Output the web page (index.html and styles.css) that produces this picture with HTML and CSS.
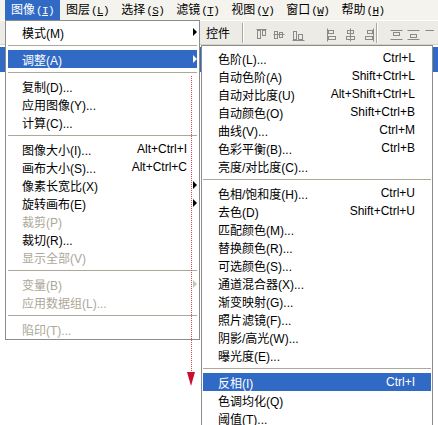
FILE: index.html
```html
<!DOCTYPE html>
<html>
<head>
    <link rel="stylesheet" href="styles.css">
</head>
<body>
    <div class="menubar">
        <span class="mb-item active">图像<span class="mn">(<u>I</u>)</span></span>
        <span class="mb-item">图层<span class="mn">(<u>L</u>)</span></span>
        <span class="mb-item">选择<span class="mn">(<u>S</u>)</span></span>
        <span class="mb-item">滤镜<span class="mn">(<u>T</u>)</span></span>
        <span class="mb-item">视图<span class="mn">(<u>V</u>)</span></span>
        <span class="mb-item">窗口<span class="mn">(<u>W</u>)</span></span>
        <span class="mb-item">帮助<span class="mn">(<u>H</u>)</span></span>
    </div>

    <div class="toolbar">
        <span class="tb-label">控件</span>
        <span class="tb-sep"></span>
        <svg class="tb-icons" width="58" height="14" viewBox="0 0 58 14">
            <g fill="none" stroke="#8a8a8a">
                <path d="M0.5 1.5h10"/><rect x="1.5" y="2.5" width="3" height="8"/><rect x="6.5" y="2.5" width="3" height="5"/>
                <path d="M17.5 6.5h11"/><rect x="18.5" y="3.5" width="3" height="7"/><rect x="23.5" y="4.5" width="3" height="5"/>
                <path d="M36.5 12.5h12"/><rect x="37.5" y="3.5" width="3" height="8"/><rect x="42.5" y="6.5" width="4" height="5"/>
            </g>
        </svg>
        <svg class="tb-icons" width="50" height="14" viewBox="0 0 50 14">
            <g fill="none" stroke="#8a8a8a">
                <path d="M1.5 0.5v13"/><rect x="2.5" y="2.5" width="5" height="3"/><rect x="2.5" y="8.5" width="7" height="3"/>
                <path d="M24.5 0.5v13"/><rect x="21.5" y="2.5" width="6" height="3"/><rect x="20.5" y="8.5" width="8" height="3"/>
                <path d="M47.5 0.5v13"/><rect x="41.5" y="2.5" width="5" height="3"/><rect x="39.5" y="8.5" width="7" height="3"/>
            </g>
        </svg>
        <span class="tb-sep"></span>
        <svg class="tb-icons" width="44" height="14" viewBox="0 0 44 14">
            <g fill="none" stroke="#8a8a8a">
                <path d="M0.5 2.5h12M0.5 11.5h12"/><rect x="3.5" y="4.5" width="6" height="3"/>
                <path d="M17.5 2.5h12M17.5 11.5h12"/><rect x="20.5" y="6.5" width="6" height="3"/>
                <path d="M35.5 2.5h9"/>
            </g>
        </svg>
    </div>
    <div class="desk">
        <div class="palette-title"></div>
    </div>

    <div class="menu menu-main">
        <div class="item"><span class="label">模式(M)</span><span class="arrow"><i></i></span></div>
        <div class="sep"></div>
        <div class="item hl"><span class="label">调整(A)</span><span class="arrow"><i></i></span></div>
        <div class="sep"></div>
        <div class="item"><span class="label">复制(D)...</span><span class="arrow"></span></div>
        <div class="item"><span class="label">应用图像(Y)...</span><span class="arrow"></span></div>
        <div class="item"><span class="label">计算(C)...</span><span class="arrow"></span></div>
        <div class="sep"></div>
        <div class="item"><span class="label">图像大小(I)...</span><span class="key">Alt+Ctrl+I</span><span class="arrow"></span></div>
        <div class="item"><span class="label">画布大小(S)...</span><span class="key">Alt+Ctrl+C</span><span class="arrow"></span></div>
        <div class="item"><span class="label">像素长宽比(X)</span><span class="arrow"><i></i></span></div>
        <div class="item"><span class="label">旋转画布(E)</span><span class="arrow"><i></i></span></div>
        <div class="item off"><span class="label">裁剪(P)</span><span class="arrow"></span></div>
        <div class="item"><span class="label">裁切(R)...</span><span class="arrow"></span></div>
        <div class="item off"><span class="label">显示全部(V)</span><span class="arrow"></span></div>
        <div class="sep"></div>
        <div class="item off"><span class="label">变量(B)</span><span class="arrow"><i></i></span></div>
        <div class="item off"><span class="label">应用数据组(L)...</span><span class="arrow"></span></div>
        <div class="sep"></div>
        <div class="item off"><span class="label">陷印(T)...</span><span class="arrow"></span></div>
    </div>

    <div class="menu menu-sub">
        <div class="item"><span class="label">色阶(L)...</span><span class="key">Ctrl+L</span></div>
        <div class="item"><span class="label">自动色阶(A)</span><span class="key">Shift+Ctrl+L</span></div>
        <div class="item"><span class="label">自动对比度(U)</span><span class="key">Alt+Shift+Ctrl+L</span></div>
        <div class="item"><span class="label">自动颜色(O)</span><span class="key">Shift+Ctrl+B</span></div>
        <div class="item"><span class="label">曲线(V)...</span><span class="key">Ctrl+M</span></div>
        <div class="item"><span class="label">色彩平衡(B)...</span><span class="key">Ctrl+B</span></div>
        <div class="item"><span class="label">亮度/对比度(C)...</span></div>
        <div class="sep"></div>
        <div class="item"><span class="label">色相/饱和度(H)...</span><span class="key">Ctrl+U</span></div>
        <div class="item"><span class="label">去色(D)</span><span class="key">Shift+Ctrl+U</span></div>
        <div class="item"><span class="label">匹配颜色(M)...</span></div>
        <div class="item"><span class="label">替换颜色(R)...</span></div>
        <div class="item"><span class="label">可选颜色(S)...</span></div>
        <div class="item"><span class="label">通道混合器(X)...</span></div>
        <div class="item"><span class="label">渐变映射(G)...</span></div>
        <div class="item"><span class="label">照片滤镜(F)...</span></div>
        <div class="item"><span class="label">阴影/高光(W)...</span></div>
        <div class="item"><span class="label">曝光度(E)...</span></div>
        <div class="sep"></div>
        <div class="item hl"><span class="label">反相(I)</span><span class="key">Ctrl+I</span></div>
        <div class="item"><span class="label">色调均化(Q)</span></div>
        <div class="item"><span class="label">阈值(T)...</span></div>
    </div>

    <!-- red dotted pointer drawn over the menu -->
    <svg class="pointer" width="10" height="312" viewBox="0 0 10 312">
        <path d="M5.5 0v296" stroke="#e03c50" stroke-width="1" stroke-dasharray="1 1"/>
        <polygon points="1,296 9,296 5,310" fill="#c8102e"/>
    </svg>
</body>
</html>
```

FILE: styles.css
```css
body {
    margin: 0;
    width: 438px;
    height: 425px;
    overflow: hidden;
    position: relative;
    background: #fff;
    font-family: "Liberation Sans", "Noto Sans CJK SC", sans-serif;
    font-size: 12px;
    color: #000;
}
.menubar {
    display: flex;
    height: 20px;
    padding-left: 5px;
    background: #f4f3ee;
}
.mb-item {
    padding: 0 6px;
    line-height: 20px;
}
.mb-item.active {
    background: #316ac5;
    color: #fff;
}
.mn {
    font-family: "Liberation Mono", monospace;
    font-size: 11px;
    letter-spacing: -0.6px;
    margin-left: 1px;
}
.toolbar {
    display: flex;
    align-items: center;
    height: 25px;
    box-sizing: border-box;
    padding-left: 206px;
    background: #ecebe5;
    border-top: 1px solid #fff;
    border-bottom: 1px solid #d6d3c6;
}
.tb-label {
    margin-right: 12px;
}
.tb-sep {
    width: 1px;
    height: 20px;
    background: #aca899;
    border-right: 1px solid #fff;
}
.tb-icons {
    margin-left: 12px;
    margin-top: 4px;
}
.desk {
    height: 380px;
}
.palette-title {
    height: 25px;
    margin-top: 2px;
    background: #316ac5;
}
.menu {
    position: absolute;
    box-sizing: border-box;
    background: #fff;
    border: 1px solid #8c8c8c;
}
.menu-main {
    left: 5px;
    top: 20px;
    width: 195px;
    padding: 2px 2px 1px;
}
.menu-sub {
    left: 201px;
    top: 45px;
    width: 232px;
    height: 400px;
    padding: 3px 1px 0;
}
.item {
    display: flex;
    align-items: center;
    height: 18px;
    padding-left: 14px;
    white-space: nowrap;
}
.menu-sub .item {
    padding-left: 15px;
    padding-right: 16px;
}
.label {
    flex: 1;
}
.arrow {
    width: 10px;
    display: flex;
    justify-content: flex-end;
}
.arrow i {
    width: 0;
    height: 0;
    border-left: 4px solid #000;
    border-top: 4px solid transparent;
    border-bottom: 4px solid transparent;
}
.item.hl {
    background: #316ac5;
    color: #fff;
}
.item.hl .arrow i {
    border-left-color: #fff;
}
.item.off {
    color: #aca899;
}
.item.off .arrow i {
    border-left-color: #c8c5b8;
}
.sep {
    height: 1px;
    margin: 4px 0;
    background: #aca899;
}
.pointer {
    position: absolute;
    left: 186px;
    top: 76px;
}
```
